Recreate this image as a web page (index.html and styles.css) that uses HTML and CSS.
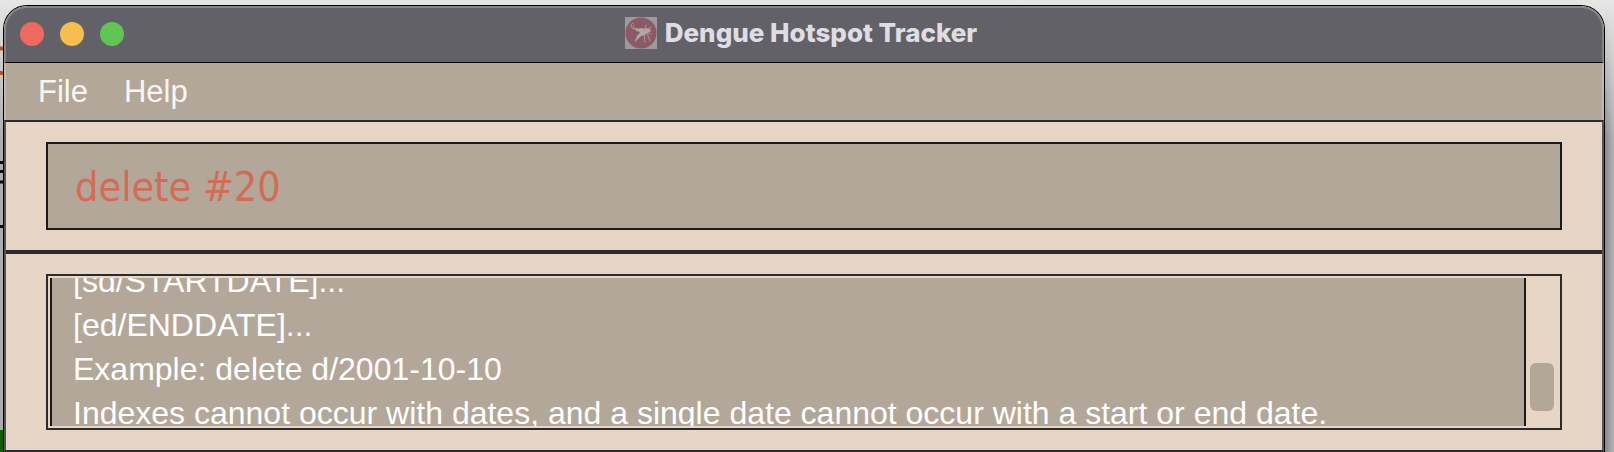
FILE: index.html
```html
<!DOCTYPE html>
<html lang="en">
<head>
<meta charset="utf-8">
<title>Dengue Hotspot Tracker</title>
<link rel="stylesheet" href="styles.css">
</head>
<body>
<div class="desktop">
  <svg class="backdrop" width="3" height="452" viewBox="0 0 3 452" aria-hidden="true">
    <path d="M0 48.500h3M0 73h3" stroke="#b5571d" stroke-width="4"/>
    <path d="M0 162.500h3M0 171.500h3M0 182h3M0 226.500h3" stroke="#0c0c0c" stroke-width="3"/>
    <path d="M0 430h3v22H0z" fill="#125f02"/>
  </svg>
  <main class="window">
    <header class="titlebar">
      <div class="controls">
        <button class="control close" aria-label="Close"></button>
        <button class="control minimize" aria-label="Minimize"></button>
        <button class="control zoom" aria-label="Zoom"></button>
      </div>
      <div class="heading">
        <svg class="logo" viewBox="0 0 32 32" aria-hidden="true">
          <path fill="#9b9a9e" d="M0 0h32v32H0z"/>
          <circle cx="16" cy="16" r="15.500" fill="#8b5a66"/>
          <g fill="none" stroke="#b3a4aa" stroke-linecap="round" stroke-linejoin="round">
            <path stroke-width=".8" d="M8 6C4 8 6 13 12 12M9 8C7 10 8 12 12 12M19 17l1 8M22 16l3 8M21 15l5 2M22 13l4-3M20 12l1-4M13 18l-3 6"/>
          </g>
          <path fill="#b3a4aa" d="M11 12l6-1 2 1 3-1 4 2-1 2-3 1-2 2-4 1-6 6 3-7 2-3-4-1z"/>
        </svg>
        <h1 class="title">Dengue Hotspot Tracker</h1>
      </div>
    </header>
    <nav class="menubar">
      <button class="menu">File</button>
      <button class="menu">Help</button>
    </nav>
    <div class="content">
      <section class="command">
        <input class="command-input" type="text" value="delete #20" aria-label="Command" spellcheck="false">
      </section>
      <section class="result">
        <div class="result-box">
          <div class="output">
            <p class="lines">[sd/STARTDATE]...<br>[ed/ENDDATE]...<br>Example: delete d/2001-10-10<br>Indexes cannot occur with dates, and a single date cannot occur with a start or end date.</p>
          </div>
          <div class="track"><div class="thumb"></div></div>
        </div>
      </section>
    </div>
  </main>
</div>
</body>
</html>
```
FILE: styles.css
```css
* {
  box-sizing: border-box;
}

body {
  margin: 0;
  font-family: "Liberation Sans", sans-serif;
}

.desktop {
  display: flex;
  min-height: 100vh;
  padding-right: 9px;
  background:
    linear-gradient(#e6e6e6, rgba(230, 230, 230, 0) 140px),
    linear-gradient(90deg, #adadad calc(100% - 9px), #8a8a8a calc(100% - 9px), #b4b4b4);
}

.backdrop {
  flex: none;
}

.window {
  flex: 1;
  display: flex;
  flex-direction: column;
  margin-top: 5px;
  border: 1px solid #000;
  border-bottom: 0;
  border-radius: 24px 24px 0 0;
  background: #e7d6c6;
  overflow: hidden;
}

.titlebar {
  display: grid;
  grid-template-columns: 1fr auto 1fr;
  align-items: center;
  height: 57px;
  padding: 0 20px 2px 14px;
  border: 2px solid #85848a;
  border-bottom: 1px solid #000;
  border-radius: 23px 23px 0 0;
  background: #626167;
}

.controls {
  display: flex;
  gap: 16px;
}

.control {
  width: 24px;
  height: 24px;
  padding: 0;
  border: 0;
  border-radius: 50%;
}

.close {
  background: #ee6a5f;
}

.minimize {
  background: #f5be4f;
}

.zoom {
  background: #61c554;
}

.heading {
  display: flex;
  align-items: center;
  gap: 8px;
  padding-bottom: 2px;
}

.logo {
  width: 32px;
  height: 32px;
}

.title {
  margin: 0;
  font-family: Inter, "Liberation Sans", sans-serif;
  font-size: 26px;
  line-height: 32px;
  font-weight: 800;
  color: #dfdde4;
}

.menubar {
  display: flex;
  gap: 36px;
  height: 57px;
  padding: 0 32px;
  border: solid #c2b9ae;
  border-width: 0 2px;
  background: #b3a79a;
}

.menu {
  padding: 0;
  border: 0;
  background: none;
  font-family: inherit;
  font-size: 31px;
  color: #f8f6f4;
}

.content {
  flex: 1;
  border: 2px solid #555;
  border-top-color: #2b2b2d;
  border-bottom-color: #2b2b2d;
}

.command {
  padding: 20px 40px;
  border-bottom: 4px solid #2b2b2d;
}

.command-input {
  display: block;
  width: 100%;
  height: 88px;
  padding: 2px 27px 0;
  border: 2px solid #1a1a1c;
  border-radius: 0;
  outline: 0;
  background: #b3a79a;
  font-family: "DejaVu Sans Condensed", "Noto Sans", sans-serif;
  font-size: 41px;
  color: #d36b55;
}

.result {
  padding: 20px 40px;
}

.result-box {
  display: flex;
  height: 156px;
  padding: 2px;
  border: 2px solid #2b2b2d;
}

.output {
  flex: 1;
  display: flex;
  align-items: flex-end;
  border: solid #1a1a1c;
  border-width: 0 2px;
  background: #b3a79a;
  overflow: hidden;
}

.lines {
  margin: 0 21px -9px;
  font-size: 32px;
  line-height: 44px;
  white-space: nowrap;
  color: #fff;
}

.track {
  display: flex;
  align-items: flex-end;
  width: 32px;
  padding: 0 4px 15px;
}

.thumb {
  width: 24px;
  height: 48px;
  border-radius: 6px;
  background: #b3a79a;
}
```
